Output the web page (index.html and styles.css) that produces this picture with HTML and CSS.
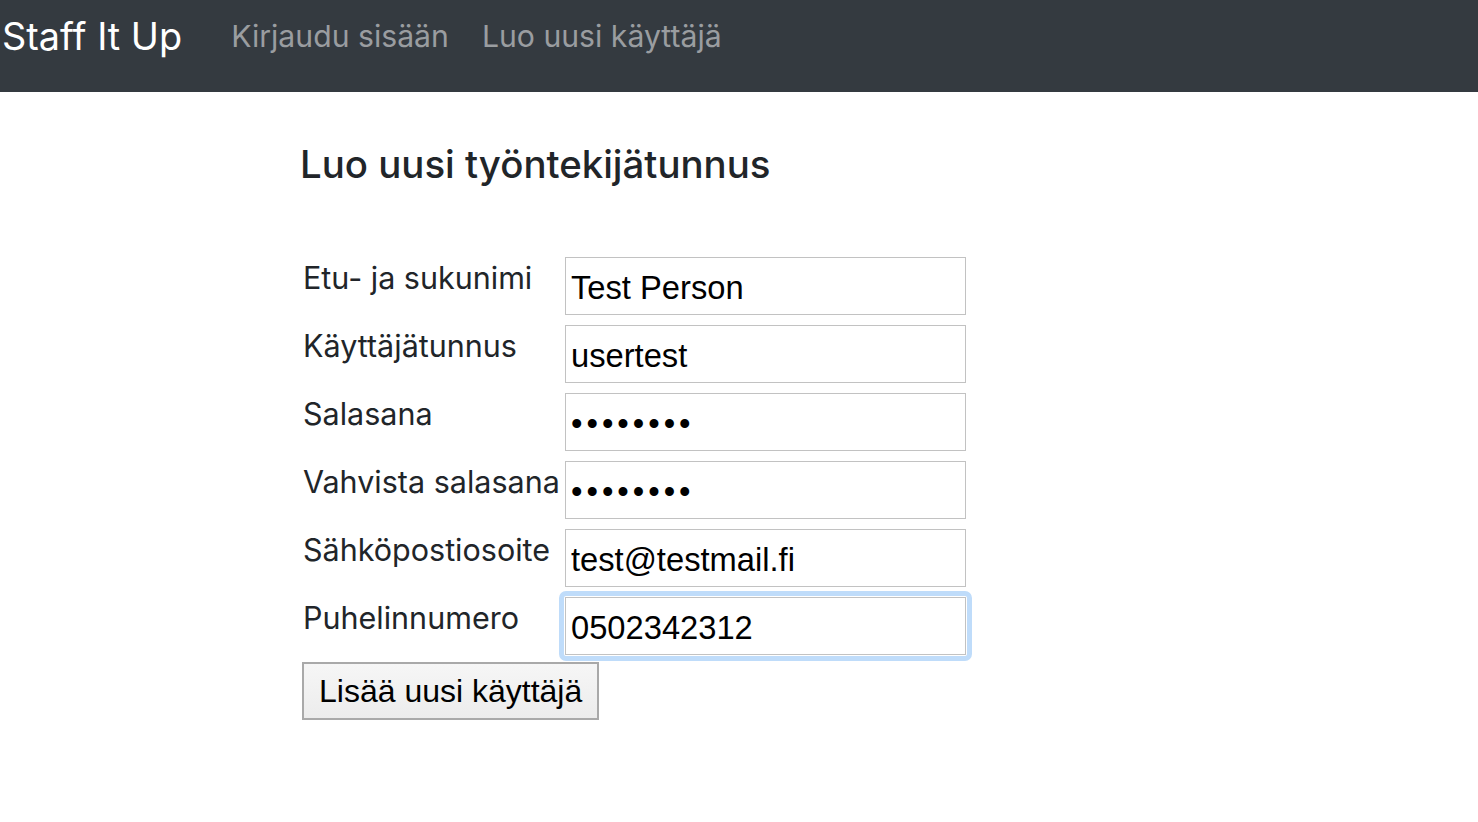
FILE: index.html
```html
<!DOCTYPE html>
<html lang="fi">
<head>
<meta charset="utf-8">
<title>Staff It Up</title>
<link rel="stylesheet" href="styles.css">
</head>
<body>
<nav class="navbar">
  <a class="brand" href="#">Staff It Up</a>
  <a class="nav-link" href="#">Kirjaudu sisään</a>
  <a class="nav-link" href="#">Luo uusi käyttäjä</a>
</nav>
<main class="content">
  <h3 class="title">Luo uusi työntekijätunnus</h3>
  <form class="form">
    <label class="label" for="name">Etu- ja sukunimi</label>
    <input class="field" id="name" type="text" value="Test Person">
    <label class="label" for="user">Käyttäjätunnus</label>
    <input class="field" id="user" type="text" value="usertest">
    <label class="label" for="pw">Salasana</label>
    <input class="field pw" id="pw" type="password" value="12345678">
    <label class="label" for="pw2">Vahvista salasana</label>
    <input class="field pw" id="pw2" type="password" value="12345678">
    <label class="label" for="mail">Sähköpostiosoite</label>
    <input class="field" id="mail" type="text" value="test@testmail.fi">
    <label class="label" for="phone">Puhelinnumero</label>
    <div class="focus-ring">
      <input class="field" id="phone" type="text" value="0502342312">
    </div>
    <div class="actions">
      <button class="btn" type="button">Lisää uusi käyttäjä</button>
    </div>
  </form>
</main>
</body>
</html>
```
FILE: styles.css
```css
* { box-sizing: border-box; }
html, body { margin: 0; padding: 0; background: #fff; }
body {
  font-family: "Inter", "Noto Sans", sans-serif;
  color: #212529;
}
.navbar {
  height: 92px;
  background: #343a40;
  display: flex;
  align-items: flex-start;
  padding: 14px 0 0 2px;
}
.brand {
  color: #fff;
  text-decoration: none;
  font-size: 37.8px;
  line-height: 44px;
  margin-right: 49px;
}
.nav-link {
  color: #9a9da0;
  text-decoration: none;
  font-size: 30.2px;
  line-height: 44px;
  margin-right: 33px;
}
.content {
  padding: 48px 0 0 300px;
}
.title {
  margin: 0 0 69px 0;
  font-size: 38.4px;
  font-weight: 500;
  line-height: 48px;
  color: #212529;
}
.form {
  display: grid;
  grid-template-columns: 265px 401px;
  grid-auto-rows: 58px;
  row-gap: 10px;
  align-items: start;
}
.label {
  padding: 3px 0 0 3px;
  font-size: 30.5px;
  line-height: 36px;
  color: #212529;
}
.field {
  display: block;
  width: 401px;
  height: 58px;
  border: 1px solid #c2c2c2;
  padding: 3px 5px 0;
  font-family: "Liberation Sans", Arial, sans-serif;
  font-size: 32.7px;
  color: #000;
  background: #fff;
  outline: none;
}
.pw { letter-spacing: 4px; }
.focus-ring {
  margin: -6px 0 0 -6px;
  width: 413px;
  padding: 1px;
  border: 5px solid #bfdcfa;
  border-radius: 7px;
}
.actions {
  grid-column: 1 / 3;
  margin-top: -3px;
  padding-left: 2px;
}
.btn {
  height: 58px;
  padding: 0 15px;
  font-family: "Liberation Sans", Arial, sans-serif;
  font-size: 32px;
  color: #000;
  background: linear-gradient(#f6f6f6, #ececec);
  border: 2px solid #a9a9a9;
  border-radius: 0;
}
```
